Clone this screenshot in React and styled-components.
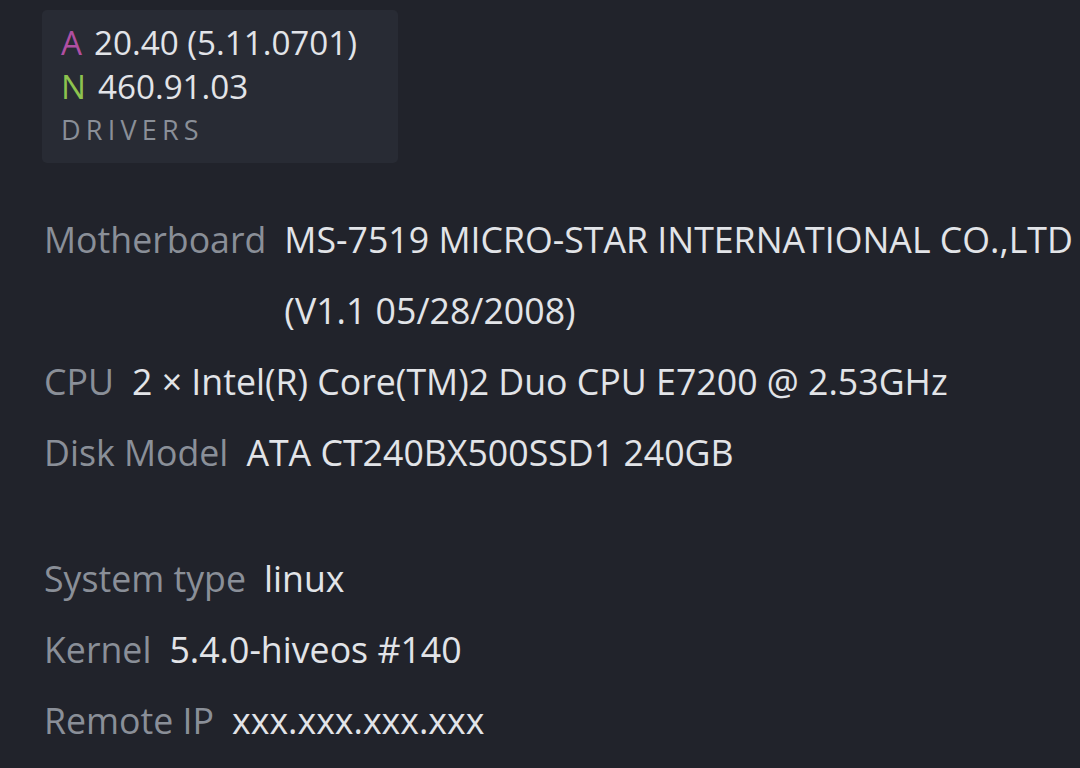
import React from "react";
import styled, { createGlobalStyle } from "styled-components";

const Global = createGlobalStyle`
  html, body { margin: 0; padding: 0; background: #21232b; }
  body { font-family: "Open Sans", "Noto Sans", sans-serif; }
`;

const Page = styled.div`
  padding: 10px 0 0 42px;
  width: 1080px;
  box-sizing: border-box;
  min-height: 768px;
  overflow: hidden;
`;

const DriversCard = styled.div`
  width: 356px;
  box-sizing: border-box;
  background: #282b34;
  border-radius: 5px;
  padding: 11px 18px 13px 19px;
`;

const DriverLine = styled.div`
  font-size: 33.2px;
  line-height: 44px;
  color: #e2e4e8;
  white-space: nowrap;
`;

const Vendor = styled.span`
  color: ${(p) => p.$color};
  margin-right: 12px;
`;

const CardTitle = styled.div`
  font-size: 27px;
  line-height: 41px;
  letter-spacing: 5.2px;
  color: #8a8f98;
`;

const Section = styled.div`
  margin-top: ${(p) => p.$gap}px;
`;

const Row = styled.div`
  display: flex;
  align-items: flex-start;
  font-size: 35.7px;
  line-height: 71px;
  padding-left: 2px;
`;

const Label = styled.span`
  color: #8a8f98;
  white-space: nowrap;
  margin-right: 18px;
`;

const Value = styled.span`
  color: #e2e4e8;
  flex: 1;
  min-width: 0;
`;

const hardware = [
  ["Motherboard", "MS-7519 MICRO-STAR INTERNATIONAL CO.,LTD (V1.1 05/28/2008)"],
  ["CPU", "2 × Intel(R) Core(TM)2 Duo CPU E7200 @ 2.53GHz"],
  ["Disk Model", "ATA CT240BX500SSD1 240GB"],
];

const system = [
  ["System type", "linux"],
  ["Kernel", "5.4.0-hiveos #140"],
  ["Remote IP", "xxx.xxx.xxx.xxx"],
];

export default function App() {
  return (
    <>
      <Global />
      <Page>
        <DriversCard>
          <DriverLine>
            <Vendor $color="#b04fa2">A</Vendor>20.40 (5.11.0701)
          </DriverLine>
          <DriverLine>
            <Vendor $color="#8dc34e">N</Vendor>460.91.03
          </DriverLine>
          <CardTitle>DRIVERS</CardTitle>
        </DriversCard>
        <Section $gap={41}>
          {hardware.map(([l, v]) => (
            <Row key={l}>
              <Label>{l}</Label>
              <Value>{v}</Value>
            </Row>
          ))}
        </Section>
        <Section $gap={55}>
          {system.map(([l, v]) => (
            <Row key={l}>
              <Label>{l}</Label>
              <Value>{v}</Value>
            </Row>
          ))}
        </Section>
      </Page>
    </>
  );
}
